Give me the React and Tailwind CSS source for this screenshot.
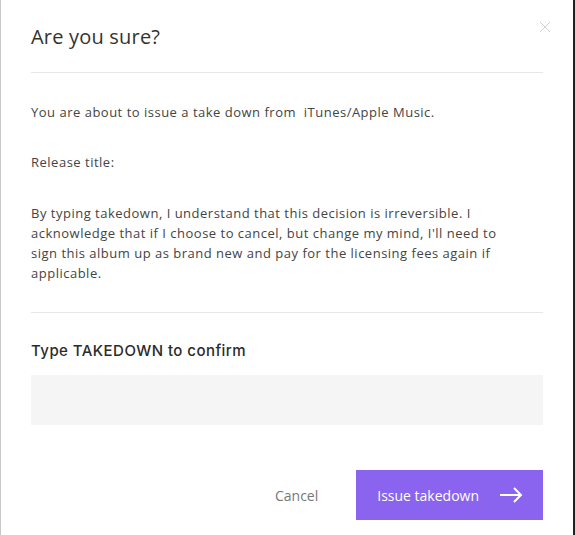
export default function App() {
  return (
    <div className="flex h-[535px] w-[575px] bg-[#222]">
      <div
        className="relative flex h-full w-[573px] flex-col border-l border-[#c8c8c8] bg-white px-[30px] text-[#333]"
        style={{ fontFamily: "'Open Sans', 'Liberation Sans', sans-serif" }}
      >
        <button className="absolute right-[22px] top-[21px] text-[#cfcfcf]">
          <svg width="12" height="12" viewBox="0 0 12 12" fill="none" stroke="currentColor" strokeWidth="1">
            <path d="M1 1 L11 11 M11 1 L1 11" />
          </svg>
        </button>

        <h2 className="mt-[23px] text-[20px] leading-[28px] tracking-[0.2px] text-[#333]">Are you sure?</h2>
        <div className="mt-[21px] h-px bg-[#e6e6e6]" />

        <div className="text-[13px] leading-[20px] tracking-[0.5px] text-[#444]">
          <p className="mt-[29px]">You are about to issue a take down from &nbsp;iTunes/Apple Music.</p>
          <p className="mt-[30px]">Release title:</p>
          <p className="mt-[31px] pr-[20px]">
            By typing takedown, I understand that this decision is irreversible. I acknowledge that if I choose to
            cancel, but change my mind, I'll need to sign this album up as brand new and pay for the licensing fees
            again if applicable.
          </p>
        </div>
        <div className="mt-[29px] h-px bg-[#e6e6e6]" />

        <label
          className="mt-[27px] text-[15px] font-medium leading-[22px] text-[#2b2b2b]"
          style={{ fontFamily: "Inter, 'Noto Sans', sans-serif", letterSpacing: "0.03em" }}
        >
          Type TAKEDOWN to confirm
        </label>
        <input className="mt-[13px] h-[50px] w-full bg-[#f5f5f5] px-3 outline-none" />

        <div className="mt-[45px] flex items-center justify-end gap-[38px]">
          <button className="text-[14px] text-[#777]">Cancel</button>
          <button className="flex h-[50px] items-center gap-[20px] bg-[#8a64ee] pl-[21px] pr-[20px] text-[14px] font-medium text-white">
            Issue takedown
            <svg width="24" height="16" viewBox="0 0 24 16" fill="none" stroke="currentColor" strokeWidth="2">
              <path d="M1 8 H22 M15 1 L22 8 L15 15" />
            </svg>
          </button>
        </div>
      </div>
    </div>
  );
}
